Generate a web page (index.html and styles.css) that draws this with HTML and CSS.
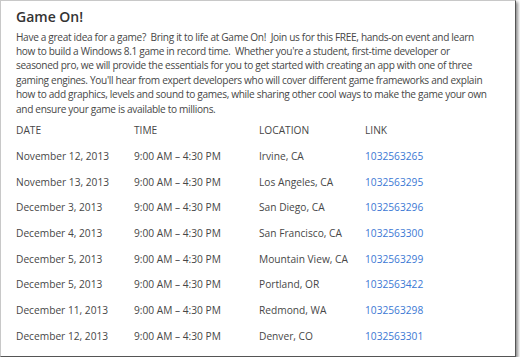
FILE: index.html
```html
<!DOCTYPE html>
<html>
<head>
<meta charset="utf-8">
<link rel="stylesheet" href="styles.css">
</head>
<body>
<div class="frame">
  <h1 class="title">Game On!</h1>
  <p class="intro">Have a great idea for a game?&nbsp; Bring it to life at Game On!&nbsp; Join us for this FREE, hands-on event and learn<br>how to build a Windows 8.1 game in record time.&nbsp; Whether you're a student, first-time developer or<br>seasoned pro, we will provide the essentials for you to get started with creating an app with one of three<br>gaming engines. You'll hear from expert developers who will cover different game frameworks and explain<br>how to add graphics, levels and sound to games, while sharing other cool ways to make the game your own<br>and ensure your game is available to millions.</p>
  <div class="events">
    <div class="row head"><span>DATE</span><span>TIME</span><span>LOCATION</span><span>LINK</span></div>
    <div class="row"><span>November 12, 2013</span><span>9:00 AM – 4:30 PM</span><span>Irvine, CA</span><a>1032563265</a></div>
    <div class="row"><span>November 13, 2013</span><span>9:00 AM – 4:30 PM</span><span>Los Angeles, CA</span><a>1032563295</a></div>
    <div class="row"><span>December 3, 2013</span><span>9:00 AM – 4:30 PM</span><span>San Diego, CA</span><a>1032563296</a></div>
    <div class="row"><span>December 4, 2013</span><span>9:00 AM – 4:30 PM</span><span>San Francisco, CA</span><a>1032563300</a></div>
    <div class="row"><span>December 5, 2013</span><span>9:00 AM – 4:30 PM</span><span>Mountain View, CA</span><a>1032563299</a></div>
    <div class="row"><span>December 5, 2013</span><span>9:00 AM – 4:30 PM</span><span>Portland, OR</span><a>1032563422</a></div>
    <div class="row"><span>December 11, 2013</span><span>9:00 AM – 4:30 PM</span><span>Redmond, WA</span><a>1032563298</a></div>
    <div class="row"><span>December 12, 2013</span><span>9:00 AM – 4:30 PM</span><span>Denver, CO</span><a>1032563301</a></div>
  </div>
</div>
</body>
</html>
```

FILE: styles.css
```css
html, body {
  margin: 0;
  padding: 0;
  background: #ffffff;
}
body {
  font-family: "Open Sans", "Noto Sans", sans-serif;
  color: #474747;
}
.frame {
  box-sizing: border-box;
  width: 516px;
  height: 357px;
  background: #ffffff;
  border-left: 1px solid #c8c8c8;
  border-top: 1px solid #c8c8c8;
  border-right: 1px solid #555555;
  border-bottom: 1px solid #555555;
  box-shadow: 2px 2px 3px rgba(0,0,0,0.45);
  padding: 7px 0 0 15px;
}
.title {
  margin: 0;
  font-size: 14px;
  font-weight: 600;
  color: #333333;
  line-height: 18px;
}
.intro {
  margin: 3.5px 0 0 0;
  font-size: 10.1px;
  letter-spacing: -0.32px;
  line-height: 14.4px;
  white-space: nowrap;
}
.events {
  margin-top: 1.5px;
  font-size: 10.2px;
}
.row {
  display: grid;
  grid-template-columns: 118px 125px 106px auto;
  height: 25.7px;
  align-items: center;
}
.row a {
  color: #3b78d4;
  text-decoration: none;
}
```
